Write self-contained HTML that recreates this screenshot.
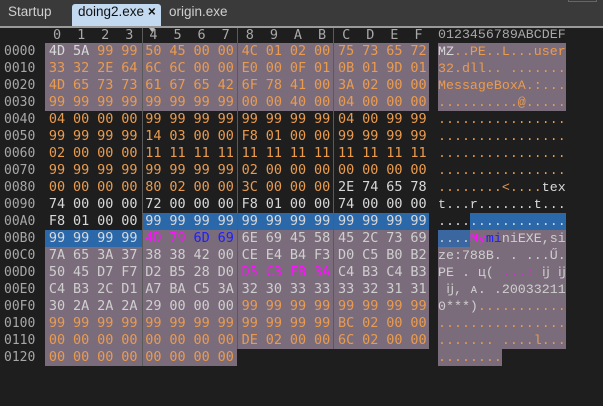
<!DOCTYPE html>
<html><head><meta charset="utf-8"><style>
body{margin:0;width:603px;height:406px;background:#1e1e1e;overflow:hidden;position:relative;font-family:"DejaVu Sans Mono","Liberation Mono",monospace;}
.tb{position:absolute;left:0;top:0;width:603px;height:27px;background:#3a3a3a;}
.tab{position:absolute;top:4px;height:23px;line-height:23px;font:13.5px "Liberation Sans",sans-serif;color:#d0d0d0;white-space:nowrap;}
.act{background:#c3d9ef;color:#111;padding:0 0 0 6px;border-radius:3px 3px 0 0;width:83px;overflow:hidden;}
.line{position:absolute;left:0;top:26px;width:603px;height:2px;background:#9a9a9a;}
.bg{position:absolute;}
.p{background:#7b6c7b;}.bl{background:#2b68aa;}.bl2{background:#3a67a0;}
.vs{position:absolute;top:28px;width:1px;height:338px;background:#5a5a5a;}
.hdr{position:absolute;top:27px;height:16px;line-height:16px;font-size:13px;color:#a8a8a8;}
.row{position:absolute;left:45px;height:17px;line-height:17px;font-size:13.5px;display:flex;}
.row span{width:24.1px;text-align:center;}
.off{position:absolute;left:4px;font-size:13px;color:#a8a8a8;line-height:17px;}
.asc{position:absolute;left:438px;font-size:13.3px;line-height:17px;white-space:pre;font-family:"Liberation Mono",monospace;letter-spacing:0;}
.o{color:#ea9b4e}.w{color:#d8d8d8}.l{color:#cfcfcf}.m{color:#ff10ff}.b{color:#1e1eff}
</style></head><body>
<div class="tb"></div>
<div class="tab" style="left:8px">Startup</div>
<div class="tab act" style="left:72px">doing2.exe <b>×</b></div>
<div class="tab" style="left:169px">origin.exe</div>
<div class="line"></div>
<div style="position:absolute;left:568px;top:0;width:27px;height:1px;border:1px solid #666;border-top:none"></div>

<div class="bg p" style="left:45px;top:43px;width:384px;height:68px"></div>
<div class="bg p" style="left:438px;top:43px;width:128px;height:68px"></div>
<div class="bg bl" style="left:142px;top:213px;width:287px;height:17px"></div>
<div class="bg bl" style="left:470px;top:213px;width:96px;height:17px"></div>
<div class="bg bl" style="left:45px;top:230px;width:97px;height:17px"></div>
<div class="bg p" style="left:142px;top:230px;width:287px;height:17px"></div>
<div class="bg bl2" style="left:438px;top:230px;width:32px;height:17px"></div>
<div class="bg p" style="left:470px;top:230px;width:96px;height:17px"></div>
<div class="bg p" style="left:45px;top:247px;width:384px;height:102px"></div>
<div class="bg p" style="left:438px;top:247px;width:128px;height:102px"></div>
<div class="bg p" style="left:45px;top:349px;width:192px;height:17px"></div>
<div class="bg p" style="left:438px;top:349px;width:64px;height:17px"></div>

<div class="vs" style="left:142px"></div>
<div class="vs" style="left:237px;height:321px"></div>
<div class="vs" style="left:333px;height:321px"></div>

<div class="row" style="top:27px;height:16px;line-height:16px;color:#a8a8a8"><span>0</span><span>1</span><span>2</span><span>3</span><span>4</span><span>5</span><span>6</span><span>7</span><span>8</span><span>9</span><span>A</span><span>B</span><span>C</span><span>D</span><span>E</span><span>F</span></div>
<div class="hdr" style="left:438px;font-family:'Liberation Mono',monospace;font-size:13.3px">0123456789ABCDEF</div>
<div style="position:absolute;left:149px;top:28px;width:0;height:0;border-left:3px solid transparent;border-right:3px solid transparent;border-top:4px solid #bbb"></div>

<div class="off" style="top:43px">0000<br>0010<br>0020<br>0030<br>0040<br>0050<br>0060<br>0070<br>0080<br>0090<br>00A0<br>00B0<br>00C0<br>00D0<br>00E0<br>00F0<br>0100<br>0110<br>0120</div>

<div class="row o" style="top:43px"><span class="w">4D</span><span class="w">5A</span><span>99</span><span>99</span><span>50</span><span>45</span><span>00</span><span>00</span><span>4C</span><span>01</span><span>02</span><span>00</span><span>75</span><span>73</span><span>65</span><span>72</span></div>
<div class="row o" style="top:60px"><span>33</span><span>32</span><span>2E</span><span>64</span><span>6C</span><span>6C</span><span>00</span><span>00</span><span>E0</span><span>00</span><span>0F</span><span>01</span><span>0B</span><span>01</span><span>9D</span><span>01</span></div>
<div class="row o" style="top:77px"><span>4D</span><span>65</span><span>73</span><span>73</span><span>61</span><span>67</span><span>65</span><span>42</span><span>6F</span><span>78</span><span>41</span><span>00</span><span>3A</span><span>02</span><span>00</span><span>00</span></div>
<div class="row o" style="top:94px"><span>99</span><span>99</span><span>99</span><span>99</span><span>99</span><span>99</span><span>99</span><span>99</span><span>00</span><span>00</span><span>40</span><span>00</span><span>04</span><span>00</span><span>00</span><span>00</span></div>
<div class="row o" style="top:111px"><span>04</span><span>00</span><span>00</span><span>00</span><span>99</span><span>99</span><span>99</span><span>99</span><span>99</span><span>99</span><span>99</span><span>99</span><span>04</span><span>00</span><span>99</span><span>99</span></div>
<div class="row o" style="top:128px"><span>99</span><span>99</span><span>99</span><span>99</span><span>14</span><span>03</span><span>00</span><span>00</span><span>F8</span><span>01</span><span>00</span><span>00</span><span>99</span><span>99</span><span>99</span><span>99</span></div>
<div class="row o" style="top:145px"><span>02</span><span>00</span><span>00</span><span>00</span><span>11</span><span>11</span><span>11</span><span>11</span><span>11</span><span>11</span><span>11</span><span>11</span><span>11</span><span>11</span><span>11</span><span>11</span></div>
<div class="row o" style="top:162px"><span>99</span><span>99</span><span>99</span><span>99</span><span>99</span><span>99</span><span>99</span><span>99</span><span>02</span><span>00</span><span>00</span><span>00</span><span>00</span><span>00</span><span>00</span><span>00</span></div>
<div class="row o" style="top:179px"><span>00</span><span>00</span><span>00</span><span>00</span><span>80</span><span>02</span><span>00</span><span>00</span><span>3C</span><span>00</span><span>00</span><span>00</span><span class="w">2E</span><span class="w">74</span><span class="w">65</span><span class="w">78</span></div>
<div class="row w" style="top:196px"><span>74</span><span>00</span><span>00</span><span>00</span><span>72</span><span>00</span><span>00</span><span>00</span><span>F8</span><span>01</span><span>00</span><span>00</span><span>74</span><span>00</span><span>00</span><span>00</span></div>
<div class="row w" style="top:213px"><span>F8</span><span>01</span><span>00</span><span>00</span><span>99</span><span>99</span><span>99</span><span>99</span><span>99</span><span>99</span><span>99</span><span>99</span><span>99</span><span>99</span><span>99</span><span>99</span></div>
<div class="row l" style="top:230px"><span class="w">99</span><span class="w">99</span><span class="w">99</span><span class="w">99</span><span class="m">4D</span><span class="m">79</span><span class="b">6D</span><span class="b">69</span><span>6E</span><span>69</span><span>45</span><span>58</span><span>45</span><span>2C</span><span>73</span><span>69</span></div>
<div class="row l" style="top:247px"><span>7A</span><span>65</span><span>3A</span><span>37</span><span>38</span><span>38</span><span>42</span><span>00</span><span>CE</span><span>E4</span><span>B4</span><span>F3</span><span>D0</span><span>C5</span><span>B0</span><span>B2</span></div>
<div class="row l" style="top:264px"><span>50</span><span>45</span><span>D7</span><span>F7</span><span>D2</span><span>B5</span><span>28</span><span>D0</span><span class="m">D5</span><span class="m">C3</span><span class="m">FB</span><span class="m">3A</span><span>C4</span><span>B3</span><span>C4</span><span>B3</span></div>
<div class="row l" style="top:281px"><span>C4</span><span>B3</span><span>2C</span><span>D1</span><span>A7</span><span>BA</span><span>C5</span><span>3A</span><span>32</span><span>30</span><span>33</span><span>33</span><span>33</span><span>32</span><span>31</span><span>31</span></div>
<div class="row o" style="top:298px"><span class="l">30</span><span class="l">2A</span><span class="l">2A</span><span class="l">2A</span><span class="l">29</span><span class="l">00</span><span class="l">00</span><span class="l">00</span><span>99</span><span>99</span><span>99</span><span>99</span><span>99</span><span>99</span><span>99</span><span>99</span></div>
<div class="row o" style="top:315px"><span>99</span><span>99</span><span>99</span><span>99</span><span>99</span><span>99</span><span>99</span><span>99</span><span>99</span><span>99</span><span>99</span><span>99</span><span>BC</span><span>02</span><span>00</span><span>00</span></div>
<div class="row o" style="top:332px"><span>00</span><span>00</span><span>00</span><span>00</span><span>00</span><span>00</span><span>00</span><span>00</span><span>DE</span><span>02</span><span>00</span><span>00</span><span>6C</span><span>02</span><span>00</span><span>00</span></div>
<div class="row o" style="top:349px"><span>00</span><span>00</span><span>00</span><span>00</span><span>00</span><span>00</span><span>00</span><span>00</span></div>

<div class="asc o" style="top:43px"><span class="w">MZ</span>..PE..L...user
32.dll.. .......
MessageBoxA.:...
..........@.....
................
................
................
................
........&lt;....<span class="w">tex</span>
<span class="w">t...r.......t...</span>
<span class="w">................</span>
<span class="l">....<span class="m">My</span><span class="b">mi</span>niEXE,si</span>
<span class="l">ze:788B. . ...Ű.</span>
<span class="l">PE . ц( <span class="m">...:</span> ĳ ĳ</span>
<span class="l"> ĳ, ᴀ. .20033211</span>
<span class="l">0***)</span>...........
................
....... ....l...
........</div>
</body></html>
